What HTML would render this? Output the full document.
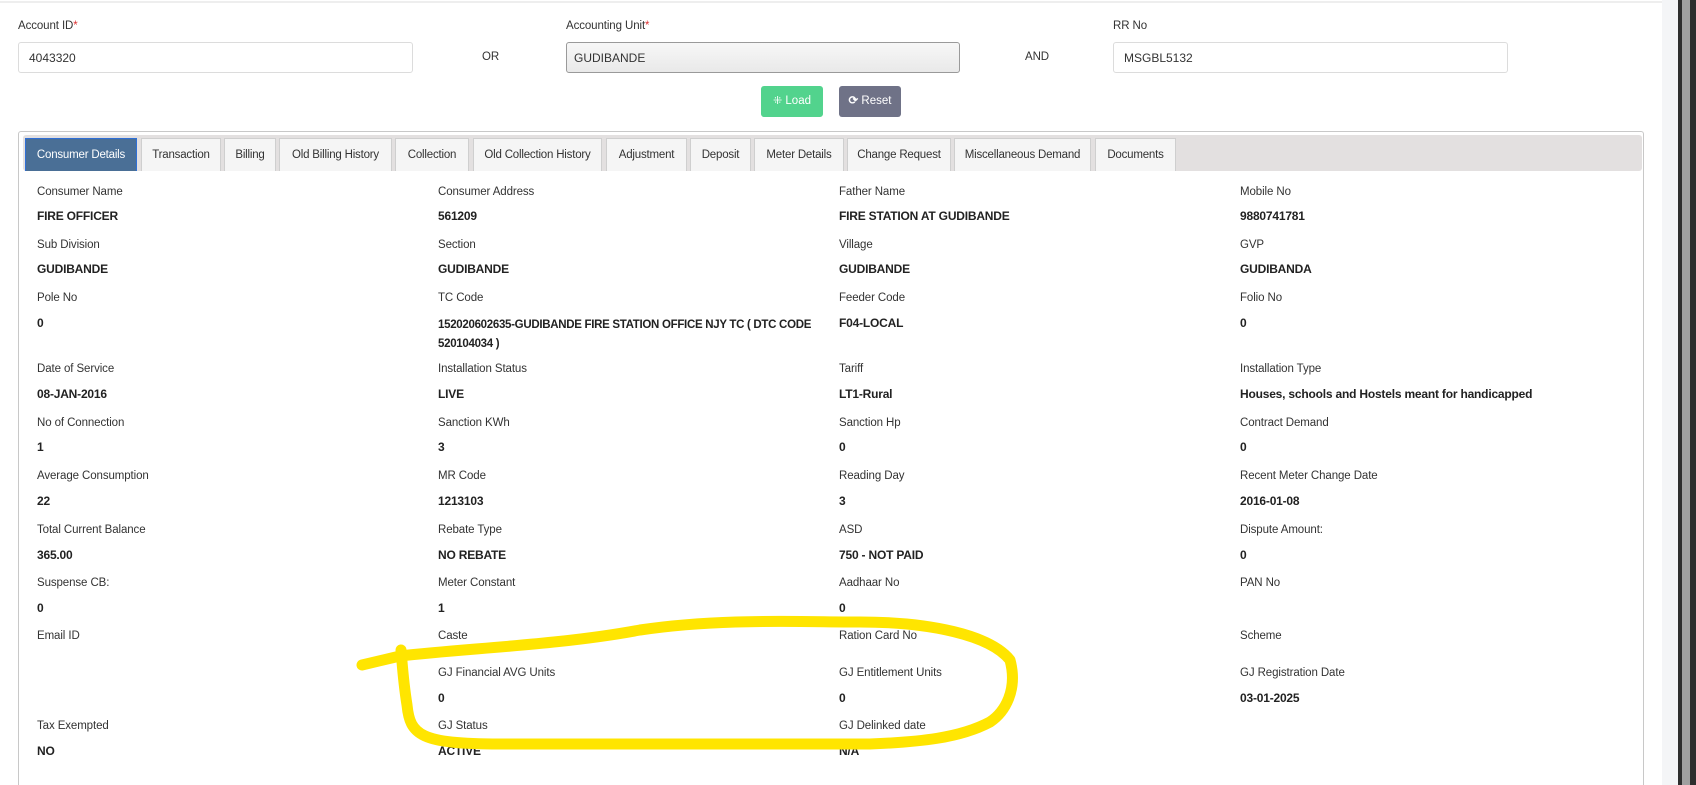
<!DOCTYPE html>
<html style="width:1696px;height:785px;overflow:hidden"><head><meta charset="utf-8"><style>
*{box-sizing:border-box;margin:0;padding:0}
body{width:1696px;height:785px;overflow:hidden;background:#fff;font-family:"Liberation Sans",sans-serif;color:#222;position:relative}
.a{position:absolute;white-space:nowrap}
.lbl{font-size:11.5px;color:#333;letter-spacing:-0.1px}
.val{font-size:12px;font-weight:bold;color:#222;letter-spacing:-0.2px}
.inp{position:absolute;border:1px solid #dcdcdc;border-radius:3px;height:31px;font-size:12px;padding:8px 10px;color:#333}
.tab{position:absolute;top:138px;height:33px;background:#f5f5f5;border:1px solid #cfcfcf;border-bottom:none;font-size:11.5px;color:#333;text-align:center;line-height:32px;letter-spacing:-0.2px}
.btn{position:absolute;top:86px;height:31px;border-radius:3px;color:#fff;font-size:11.5px;line-height:31px;text-align:center}
</style></head><body>
<div class="a" style="left:0;top:0;width:1662px;height:3px;border-bottom:2px solid #eee"></div>
<div class="a" style="left:1662px;top:0;width:16px;height:785px;background:#f4f5f7"></div>
<div class="a" style="left:1678px;top:0;width:18px;height:785px;background:#2e2e2e"></div>
<div class="a" style="left:1682px;top:0;width:8px;height:785px;background:#a0a0a0"></div>

<div class="a lbl" style="left:18px;top:20px">Account ID<span style="color:#d33">*</span></div>
<div class="inp" style="left:18px;top:42px;width:395px">4043320</div>
<div class="a lbl" style="left:482px;top:51px">OR</div>
<div class="a lbl" style="left:566px;top:20px">Accounting Unit<span style="color:#d33">*</span></div>
<div class="inp" style="left:566px;top:42px;width:394px;border-color:#9a9a9a;background:linear-gradient(#f7f7f7,#e9e9e9);padding:8px 7px">GUDIBANDE</div>
<div class="a lbl" style="left:1025px;top:51px">AND</div>
<div class="a lbl" style="left:1113px;top:20px">RR No</div>
<div class="inp" style="left:1113px;top:42px;width:395px">MSGBL5132</div>

<div class="btn" style="left:761px;width:62px;background:#52d38d"><span style="font-size:11px">&#8284;</span> Load</div>
<div class="btn" style="left:839px;width:62px;background:#6f7287"><b>&#10227;</b> Reset</div>

<div class="a" style="left:18px;top:131px;width:1626px;height:654px;border:1px solid #c8c8c8;border-bottom:none;border-radius:3px 3px 0 0"></div>
<div class="a" style="left:23px;top:135px;width:1619px;height:36px;background:#e3e0e0;border-radius:3px"></div>
<div class="tab" style="left:25px;width:112px;background:#4a6f96;color:#fff;border-color:#2f6fd6">Consumer Details</div>
<div class="tab" style="left:141px;width:80px">Transaction</div>
<div class="tab" style="left:224px;width:52px">Billing</div>
<div class="tab" style="left:279px;width:113px">Old Billing History</div>
<div class="tab" style="left:395px;width:74px">Collection</div>
<div class="tab" style="left:473px;width:129px">Old Collection History</div>
<div class="tab" style="left:606px;width:81px">Adjustment</div>
<div class="tab" style="left:690px;width:61px">Deposit</div>
<div class="tab" style="left:754px;width:90px">Meter Details</div>
<div class="tab" style="left:847px;width:104px">Change Request</div>
<div class="tab" style="left:954px;width:137px">Miscellaneous Demand</div>
<div class="tab" style="left:1095px;width:81px">Documents</div>

<div class="a lbl" style="left:37px;top:186px">Consumer Name</div><div class="a val" style="left:37px;top:209px">FIRE OFFICER</div>
<div class="a lbl" style="left:438px;top:186px">Consumer Address</div><div class="a val" style="left:438px;top:209px">561209</div>
<div class="a lbl" style="left:839px;top:186px">Father Name</div><div class="a val" style="left:839px;top:209px">FIRE STATION AT GUDIBANDE</div>
<div class="a lbl" style="left:1240px;top:186px">Mobile No</div><div class="a val" style="left:1240px;top:209px">9880741781</div>

<div class="a lbl" style="left:37px;top:239px">Sub Division</div><div class="a val" style="left:37px;top:262px">GUDIBANDE</div>
<div class="a lbl" style="left:438px;top:239px">Section</div><div class="a val" style="left:438px;top:262px">GUDIBANDE</div>
<div class="a lbl" style="left:839px;top:239px">Village</div><div class="a val" style="left:839px;top:262px">GUDIBANDE</div>
<div class="a lbl" style="left:1240px;top:239px">GVP</div><div class="a val" style="left:1240px;top:262px">GUDIBANDA</div>

<div class="a lbl" style="left:37px;top:292px">Pole No</div><div class="a val" style="left:37px;top:316px">0</div>
<div class="a lbl" style="left:438px;top:292px">TC Code</div><div class="a val" style="left:438px;top:316px;line-height:19px;font-size:11.5px;letter-spacing:-0.3px">152020602635-GUDIBANDE FIRE STATION OFFICE NJY TC ( DTC CODE<br>520104034 )</div>
<div class="a lbl" style="left:839px;top:292px">Feeder Code</div><div class="a val" style="left:839px;top:316px">F04-LOCAL</div>
<div class="a lbl" style="left:1240px;top:292px">Folio No</div><div class="a val" style="left:1240px;top:316px">0</div>

<div class="a lbl" style="left:37px;top:363px">Date of Service</div><div class="a val" style="left:37px;top:387px">08-JAN-2016</div>
<div class="a lbl" style="left:438px;top:363px">Installation Status</div><div class="a val" style="left:438px;top:387px">LIVE</div>
<div class="a lbl" style="left:839px;top:363px">Tariff</div><div class="a val" style="left:839px;top:387px">LT1-Rural</div>
<div class="a lbl" style="left:1240px;top:363px">Installation Type</div><div class="a val" style="left:1240px;top:387px">Houses, schools and Hostels meant for handicapped</div>

<div class="a lbl" style="left:37px;top:417px">No of Connection</div><div class="a val" style="left:37px;top:440px">1</div>
<div class="a lbl" style="left:438px;top:417px">Sanction KWh</div><div class="a val" style="left:438px;top:440px">3</div>
<div class="a lbl" style="left:839px;top:417px">Sanction Hp</div><div class="a val" style="left:839px;top:440px">0</div>
<div class="a lbl" style="left:1240px;top:417px">Contract Demand</div><div class="a val" style="left:1240px;top:440px">0</div>

<div class="a lbl" style="left:37px;top:470px">Average Consumption</div><div class="a val" style="left:37px;top:494px">22</div>
<div class="a lbl" style="left:438px;top:470px">MR Code</div><div class="a val" style="left:438px;top:494px">1213103</div>
<div class="a lbl" style="left:839px;top:470px">Reading Day</div><div class="a val" style="left:839px;top:494px">3</div>
<div class="a lbl" style="left:1240px;top:470px">Recent Meter Change Date</div><div class="a val" style="left:1240px;top:494px">2016-01-08</div>

<div class="a lbl" style="left:37px;top:524px">Total Current Balance</div><div class="a val" style="left:37px;top:548px">365.00</div>
<div class="a lbl" style="left:438px;top:524px">Rebate Type</div><div class="a val" style="left:438px;top:548px">NO REBATE</div>
<div class="a lbl" style="left:839px;top:524px">ASD</div><div class="a val" style="left:839px;top:548px">750 - NOT PAID</div>
<div class="a lbl" style="left:1240px;top:524px">Dispute Amount:</div><div class="a val" style="left:1240px;top:548px">0</div>

<div class="a lbl" style="left:37px;top:577px">Suspense CB:</div><div class="a val" style="left:37px;top:601px">0</div>
<div class="a lbl" style="left:438px;top:577px">Meter Constant</div><div class="a val" style="left:438px;top:601px">1</div>
<div class="a lbl" style="left:839px;top:577px">Aadhaar No</div><div class="a val" style="left:839px;top:601px">0</div>
<div class="a lbl" style="left:1240px;top:577px">PAN No</div>

<div class="a lbl" style="left:37px;top:630px">Email ID</div>
<div class="a lbl" style="left:438px;top:630px">Caste</div>
<div class="a lbl" style="left:839px;top:630px">Ration Card No</div>
<div class="a lbl" style="left:1240px;top:630px">Scheme</div>

<div class="a lbl" style="left:438px;top:667px">GJ Financial AVG Units</div><div class="a val" style="left:438px;top:691px">0</div>
<div class="a lbl" style="left:839px;top:667px">GJ Entitlement Units</div><div class="a val" style="left:839px;top:691px">0</div>
<div class="a lbl" style="left:1240px;top:667px">GJ Registration Date</div><div class="a val" style="left:1240px;top:691px">03-01-2025</div>

<div class="a lbl" style="left:37px;top:720px">Tax Exempted</div><div class="a val" style="left:37px;top:744px">NO</div>
<div class="a lbl" style="left:438px;top:720px">GJ Status</div><div class="a val" style="left:438px;top:744px">ACTIVE</div>
<div class="a lbl" style="left:839px;top:720px">GJ Delinked date</div><div class="a val" style="left:839px;top:744px">N/A</div>

<svg class="a" style="left:0;top:0" width="1696" height="785">
<path d="M362,665 L400,656 C470,648 560,645 640,630 C720,618 800,622 860,622 C930,622 990,635 1010,660 C1018,690 1005,712 990,722 C960,738 920,742 870,744 L500,744 C420,744 410,735 407,705 C403,680 402,660 401,650" fill="none" stroke="#ffe500" stroke-width="11" stroke-linecap="round" stroke-linejoin="round"/>
</svg>
</body></html>
